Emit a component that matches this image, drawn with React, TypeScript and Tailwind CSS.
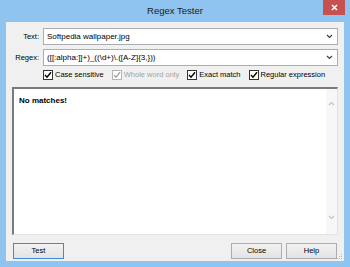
import React from "react";

const font = { fontFamily: '"Liberation Sans", Arial, sans-serif' };

const Chevron = ({ up = false, color = "#404040" }: { up?: boolean; color?: string }) => (
  <svg width="7" height="5" viewBox="0 0 7 5" fill="none">
    <path
      d={up ? "M1 4 L3.5 1.5 L6 4" : "M1 1 L3.5 3.5 L6 1"}
      stroke={color}
      strokeWidth="1.2"
    />
  </svg>
);

const Combo = ({ value }: { value: string }) => (
  <div className="flex-1 h-[17px] bg-white border border-[#abadb3] flex items-center pl-[3px] pr-[4px]">
    <span className="flex-1 text-[8px] text-black whitespace-nowrap">{value}</span>
    <Chevron />
  </div>
);

const Check = ({ label, disabled = false }: { label: string; disabled?: boolean }) => (
  <label className="flex items-center gap-[2px]">
    <span
      className={
        "w-[10px] h-[10px] border bg-white flex items-center justify-center " +
        (disabled ? "border-[#b5b5b5]" : "border-[#333333]")
      }
    >
      <svg width="8" height="8" viewBox="0 0 8 8" fill="none">
        <path d="M1 4 L3 6.2 L7 1.2" stroke={disabled ? "#a8a8a8" : "#000"} strokeWidth="1.4" />
      </svg>
    </span>
    <span className={"text-[7.5px] " + (disabled ? "text-[#a3a3a3]" : "text-black")}>{label}</span>
  </label>
);

const Button = ({ label, focused = false }: { label: string; focused?: boolean }) => (
  <button
    className={
      "w-[51px] h-[16px] text-[7.5px] text-black bg-gradient-to-b from-[#f2f2f2] to-[#e3e3e3] border " +
      (focused ? "border-[#3c8ad8]" : "border-[#adadad]")
    }
  >
    {label}
  </button>
);

export default function App() {
  return (
    <div className="w-[350px] h-[267px] bg-[#8fc3f0] flex flex-col" style={font}>
      {/* title bar */}
      <div className="h-[22px] flex items-start relative">
        <div className="flex-1 text-center text-[9.5px] leading-[22px] text-[#1b1b1b]">Regex Tester</div>
        <div className="absolute right-[5px] top-0 w-[22px] h-[15px] bg-[#c75050] flex items-center justify-center">
          <svg width="7" height="7" viewBox="0 0 7 7">
            <path d="M1 1 L6 6 M6 1 L1 6" stroke="#fff" strokeWidth="1.6" />
          </svg>
        </div>
      </div>

      {/* dialog body */}
      <div className="mx-[6px] h-[239px] bg-[#f0f0f0] flex flex-col pt-[6px] relative">
        <div className="flex items-center pr-[6px]">
          <span className="w-[33px] text-right text-[7.5px] text-black">Text:</span>
          <span className="w-[4px]" />
          <Combo value="Softpedia wallpaper.jpg" />
        </div>
        <div className="flex items-center pr-[6px] mt-[4px]">
          <span className="w-[33px] text-right text-[7.5px] text-black">Regex:</span>
          <span className="w-[4px]" />
          <Combo value="([[:alpha:]]+)_((\d+)\.([A-Z]{3,}))" />
        </div>

        <div className="flex items-center h-[14px] mt-[2px] pl-[37px] gap-[8px]">
          <Check label="Case sensitive" />
          <Check label="Whole word only" disabled />
          <Check label="Exact match" />
          <Check label="Regular expression" />
        </div>

        {/* results */}
        <div className="mx-[6px] mt-[5px] h-[148px] bg-white border-t-2 border-l-2 border-[#7a7a7a] border-r border-b border-r-[#e3e3e3] border-b-[#e3e3e3] flex">
          <div className="flex-1 pl-[5px] pt-[7px] text-[8px] font-bold text-black leading-[10px]">No matches!</div>
          <div className="w-[11px] bg-[#f7f7f7] flex flex-col items-center justify-between pt-[12px] pb-[14px]">
            <Chevron up color="#c2c2c2" />
            <Chevron color="#c2c2c2" />
          </div>
        </div>

        {/* buttons */}
        <div className="flex items-center mt-[8px] px-[7px]">
          <Button label="Test" focused />
          <div className="flex-1" />
          <div className="flex gap-[4px]">
            <Button label="Close" />
            <Button label="Help" />
          </div>
        </div>

        <svg className="absolute right-[1px] bottom-[1px]" width="6" height="6" viewBox="0 0 6 6">
          <rect x="4" y="0" width="1" height="1" fill="#b8b8b8" />
          <rect x="2" y="2" width="1" height="1" fill="#b8b8b8" />
          <rect x="4" y="2" width="1" height="1" fill="#b8b8b8" />
          <rect x="0" y="4" width="1" height="1" fill="#b8b8b8" />
          <rect x="2" y="4" width="1" height="1" fill="#b8b8b8" />
          <rect x="4" y="4" width="1" height="1" fill="#b8b8b8" />
        </svg>
      </div>
    </div>
  );
}
